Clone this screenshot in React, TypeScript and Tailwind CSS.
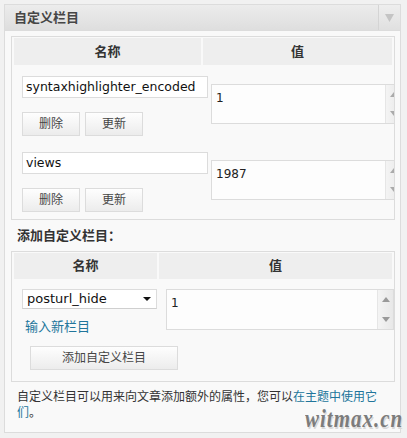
import React from "react";

const LAT = "font-['DejaVu_Sans','Noto_Sans_CJK_SC',sans-serif]";

function Btn({ children, w }: { children: React.ReactNode; w: string }) {
  return (
    <div
      className={`${w} h-[24px] border border-[#dcdcdc] bg-gradient-to-b from-[#fefefe] to-[#ececec] text-[#464646] text-[12px] flex items-center justify-center leading-none`}
    >
      {children}
    </div>
  );
}

function Scrollbar({ full }: { full?: boolean }) {
  return (
    <div className="w-[16px] shrink-0 h-full border-l border-[#e6e6e6] bg-gradient-to-r from-[#f4f4f4] to-[#e8e8e8] flex flex-col items-center justify-between py-[7px]">
      <svg width="8" height="5" viewBox="0 0 8 5">
        <polygon points="0,5 8,5 4,0" fill={full ? "#9a9a9a" : "#aaa"} />
      </svg>
      <svg width="8" height="5" viewBox="0 0 8 5">
        <polygon points="0,0 8,0 4,5" fill={full ? "#9a9a9a" : "#aaa"} />
      </svg>
    </div>
  );
}

function TextArea({ value, w }: { value: string; w: string }) {
  return (
    <div className={`${w} h-[40px] shrink-0 border border-[#dcdcdc] bg-[#fdfdfd] flex`}>
      <div className={`flex-1 pl-[4px] pt-[5px] text-[12px] leading-[16px] text-[#222] ${LAT}`}>{value}</div>
      <Scrollbar />
    </div>
  );
}

function MetaRow({ name, value }: { name: string; value: string }) {
  return (
    <div className="flex pt-[11px] pb-[5px]">
      <div className="w-[187px] shrink-0 pl-[8px]">
        <div className={`w-[186px] h-[22px] border border-[#dcdcdc] bg-white flex items-center pl-[3px] text-[12.5px] text-[#111] ${LAT}`}>
          {name}
        </div>
        <div className="flex gap-[5px] mt-[14px]">
          <Btn w="w-[58px]">删除</Btn>
          <Btn w="w-[58px]">更新</Btn>
        </div>
      </div>
      <div className="w-[2px] shrink-0" />
      <div className="pl-[8px] pt-[8px]">
        <TextArea value={value} w="w-[191px]" />
      </div>
    </div>
  );
}

export default function App() {
  return (
    <div
      className={`w-[407px] h-[438px] bg-[#f1f1f1] pt-[4px] pl-[4px] relative overflow-hidden text-[#333] ${LAT}`}
    >
      <div className="w-[397px] h-[429px] border border-[#dcdcdc] bg-[#f9f9f9]">
        {/* header */}
        <div className="h-[26px] flex border-b border-[#dcdcdc] bg-gradient-to-b from-[#ececec] to-[#dedede]">
          <div className="flex-1 flex items-center pl-[9px] text-[13px] font-bold text-[#464646]">
            自定义栏目
          </div>
          <div className="w-[22px] border-l border-[#d4d4d4] flex items-center justify-center bg-gradient-to-b from-[#eeeeee] to-[#e0e0e0]">
            <svg width="9" height="8" viewBox="0 0 9 8">
              <polygon points="0,0 9,0 4.5,8" fill="#c4c4c4" />
            </svg>
          </div>
        </div>

        {/* table 1 */}
        <div className="ml-[6px] mt-[5px] w-[384px] border border-[#dcdcdc] pt-[1px] px-[2px] pb-[2px] overflow-hidden">
          <div className="flex gap-[2px] h-[27px] text-[13px] font-bold text-[#333]">
            <div className="w-[187px] shrink-0 bg-[#eeeeee] flex items-center justify-center">名称</div>
            <div className="flex-1 bg-[#eeeeee] flex items-center justify-center">值</div>
          </div>
          <MetaRow name="syntaxhighlighter_encoded" value="1" />
          <MetaRow name="views" value="1987" />
        </div>

        <div className="h-[31px] flex items-center pl-[12px] text-[13px] font-bold text-[#333]">
          添加自定义栏目：
        </div>

        {/* table 2 */}
        <div className="ml-[6px] w-[384px] border border-[#dcdcdc] pt-[1px] px-[2px] pb-[2px] overflow-hidden">
          <div className="flex gap-[2px] h-[26px] text-[13px] font-bold text-[#333]">
            <div className="w-[143px] shrink-0 bg-[#eeeeee] flex items-center justify-center">名称</div>
            <div className="flex-1 bg-[#eeeeee] flex items-center justify-center">值</div>
          </div>
          <div className="flex pt-[10px]">
            <div className="w-[143px] shrink-0 pl-[8px]">
              <div className={`w-[135px] h-[20px] border border-[#dcdcdc] border-b-[#cfcfcf] bg-white flex items-center justify-between pl-[4px] pr-[5px] text-[13px] text-[#111] ${LAT}`}>
                <span>posturl_hide</span>
                <svg width="8" height="4" viewBox="0 0 8 4">
                  <polygon points="0,0 8,0 4,4" fill="#111" />
                </svg>
              </div>
              <div className="mt-[9px] pl-[3px] text-[13px] text-[#21759b] leading-[18px]">输入新栏目</div>
            </div>
            <div className="w-[2px] shrink-0" />
            <div className="pl-[7px]">
              <div className="w-[228px] h-[41px] shrink-0 border border-[#dcdcdc] bg-[#fdfdfd] flex">
                <div className={`flex-1 pl-[4px] pt-[5px] text-[12px] leading-[16px] text-[#222] ${LAT}`}>1</div>
                <Scrollbar full />
              </div>
            </div>
          </div>
          <div className="pl-[16px] mt-[10px] pb-[9px]">
            <Btn w="w-[148px]">添加自定义栏目</Btn>
          </div>
        </div>

        <div className="ml-[12px] mt-[7px] w-[366px] text-[12px] leading-[16px] text-[#333]">
          <div>
            自定义栏目可以用来向文章添加额外的属性，您可以<a className="text-[#21759b]">在主题中使用它</a>
          </div>
          <div>
            <a className="text-[#21759b]">们</a>。
          </div>
        </div>
      </div>

      <div
        className="absolute left-[305px] top-[407px] text-[21px] leading-[24px] font-bold italic tracking-[1px] text-[#7c7c7c] font-['Liberation_Serif',serif] scale-y-[1.2] [text-shadow:1px_1px_0_#d8d8d8]"
      >
        witmax.cn
      </div>
    </div>
  );
}
